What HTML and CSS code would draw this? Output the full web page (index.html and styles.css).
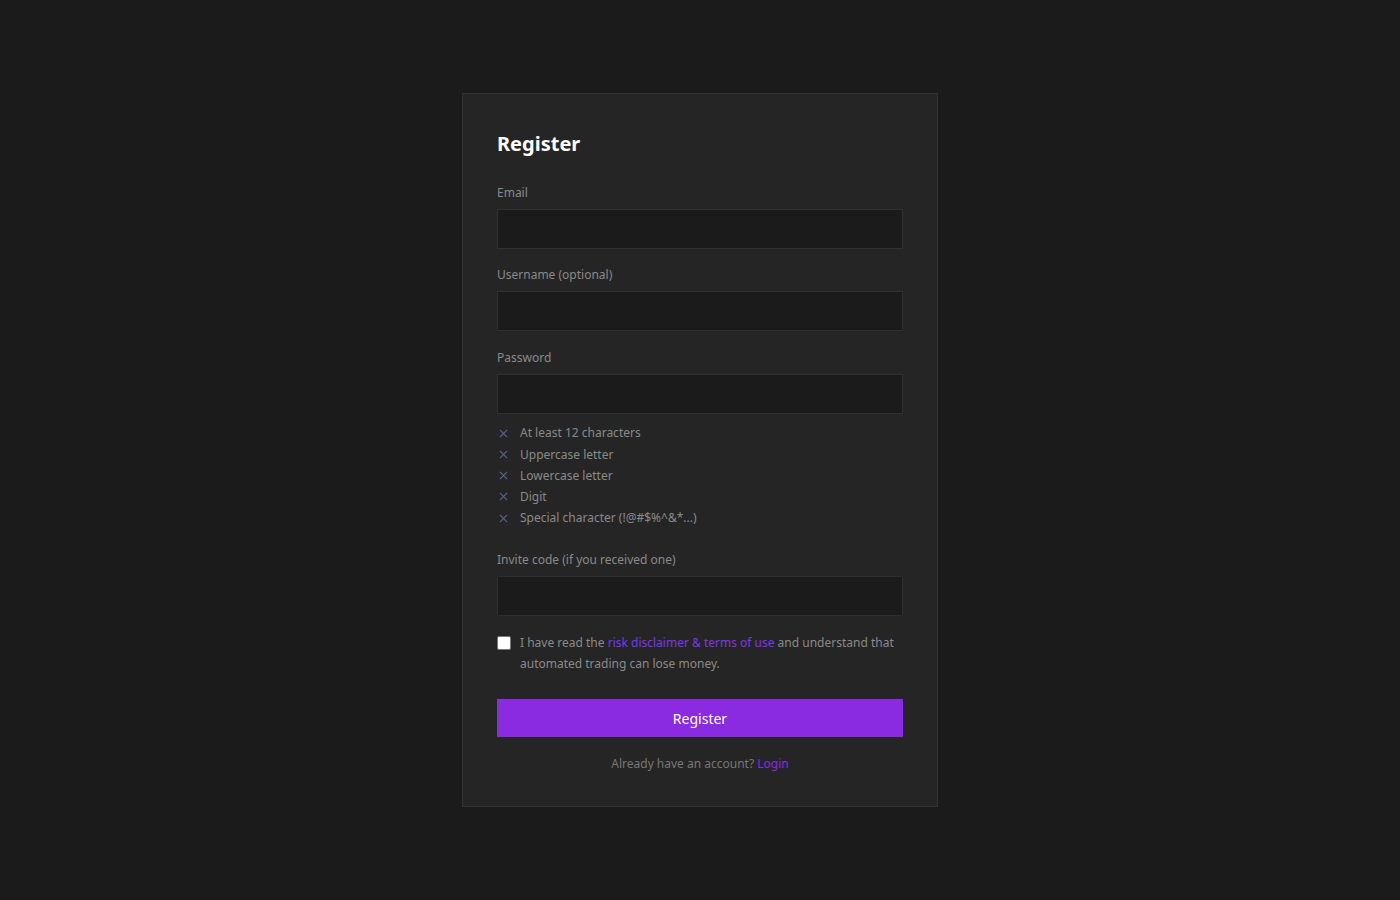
FILE: index.html
```html
<!DOCTYPE html>
<html lang="en">
<head>
  <meta charset="UTF-8" />
  <meta name="viewport" content="width=device-width, initial-scale=1" />
  <title>Register</title>
  <link rel="stylesheet" href="styles.css">
</head>
<body>
  <div class="card">
    <h1>Register</h1>

    <div class="field">
      <label for="email">Email</label>
      <input type="email" id="email">
    </div>

    <div class="field">
      <label for="username">Username (optional)</label>
      <input type="text" id="username">
    </div>

    <div class="field">
      <label for="password">Password</label>
      <input type="password" id="password">
    </div>

    <ul class="rules">
      <li><svg class="cross" viewBox="0 0 10 10"><path d="M1 1L9 9M9 1L1 9"/></svg>At least 12 characters</li>
      <li><svg class="cross" viewBox="0 0 10 10"><path d="M1 1L9 9M9 1L1 9"/></svg>Uppercase letter</li>
      <li><svg class="cross" viewBox="0 0 10 10"><path d="M1 1L9 9M9 1L1 9"/></svg>Lowercase letter</li>
      <li><svg class="cross" viewBox="0 0 10 10"><path d="M1 1L9 9M9 1L1 9"/></svg>Digit</li>
      <li><svg class="cross" viewBox="0 0 10 10"><path d="M1 1L9 9M9 1L1 9"/></svg>Special character (!@#$%^&amp;*...)</li>
    </ul>

    <div class="field">
      <label for="invite">Invite code (if you received one)</label>
      <input type="text" id="invite">
    </div>

    <label class="agree">
      <input type="checkbox">
      <span>I have read the <a href="#">risk disclaimer &amp; terms of use</a> and understand that automated trading can lose money.</span>
    </label>

    <button class="submit">Register</button>

    <p class="alt">Already have an account? <a href="#">Login</a></p>
  </div>
</body>
</html>
```

FILE: styles.css
```css
body {
  margin: 0;
  min-height: 100vh;
  display: flex;
  align-items: center;
  justify-content: center;
  background: #1b1b1b;
  font-family: "Noto Sans", sans-serif;
  font-size: 12px;
  color: #8a8a8a;
}
.card {
  width: 406px;
  padding: 35px 34px 32px;
  background: #252525;
  border: 1px solid #333;
}
h1 {
  margin: 0 0 24px;
  font-size: 20px;
  line-height: 30px;
  font-weight: 700;
  color: #fff;
}
.field {
  margin-bottom: 16.5px;
}
.field label {
  display: block;
  line-height: 20px;
  margin-bottom: 6px;
  color: #8a8a8a;
}
.field input {
  display: block;
  box-sizing: border-box;
  width: 100%;
  height: 40px;
  padding: 0 12px;
  background: #1b1b1b;
  border: 1px solid #303030;
  color: #ddd;
  font: inherit;
  outline: none;
}
.rules {
  list-style: none;
  margin: -8px 0 21px;
  padding: 0;
}
.rules li {
  display: flex;
  align-items: center;
  line-height: 21.25px;
}
.cross {
  width: 9px;
  height: 9px;
  margin: 0 12px 0 2px;
  stroke: #55698f;
  stroke-width: 1.2;
  fill: none;
}
.agree {
  display: flex;
  align-items: flex-start;
  gap: 9px;
  line-height: 21px;
  margin-bottom: 25px;
}
.agree input {
  appearance: none;
  flex: none;
  width: 14px;
  height: 14px;
  margin: 4px 0 0;
  background: #fff;
  border: 1px solid #767676;
  border-radius: 2px;
}
a {
  color: #7f35ee;
  text-decoration: none;
}
.submit {
  display: block;
  width: 100%;
  height: 38px;
  border: none;
  background: #8a2be2;
  color: #fff;
  font: inherit;
  font-size: 14px;
  cursor: pointer;
}
.alt {
  margin: 17px 0 0;
  text-align: center;
  line-height: 20px;
  color: #777;
}
.alt a {
  color: #8a2be2;
}
```
